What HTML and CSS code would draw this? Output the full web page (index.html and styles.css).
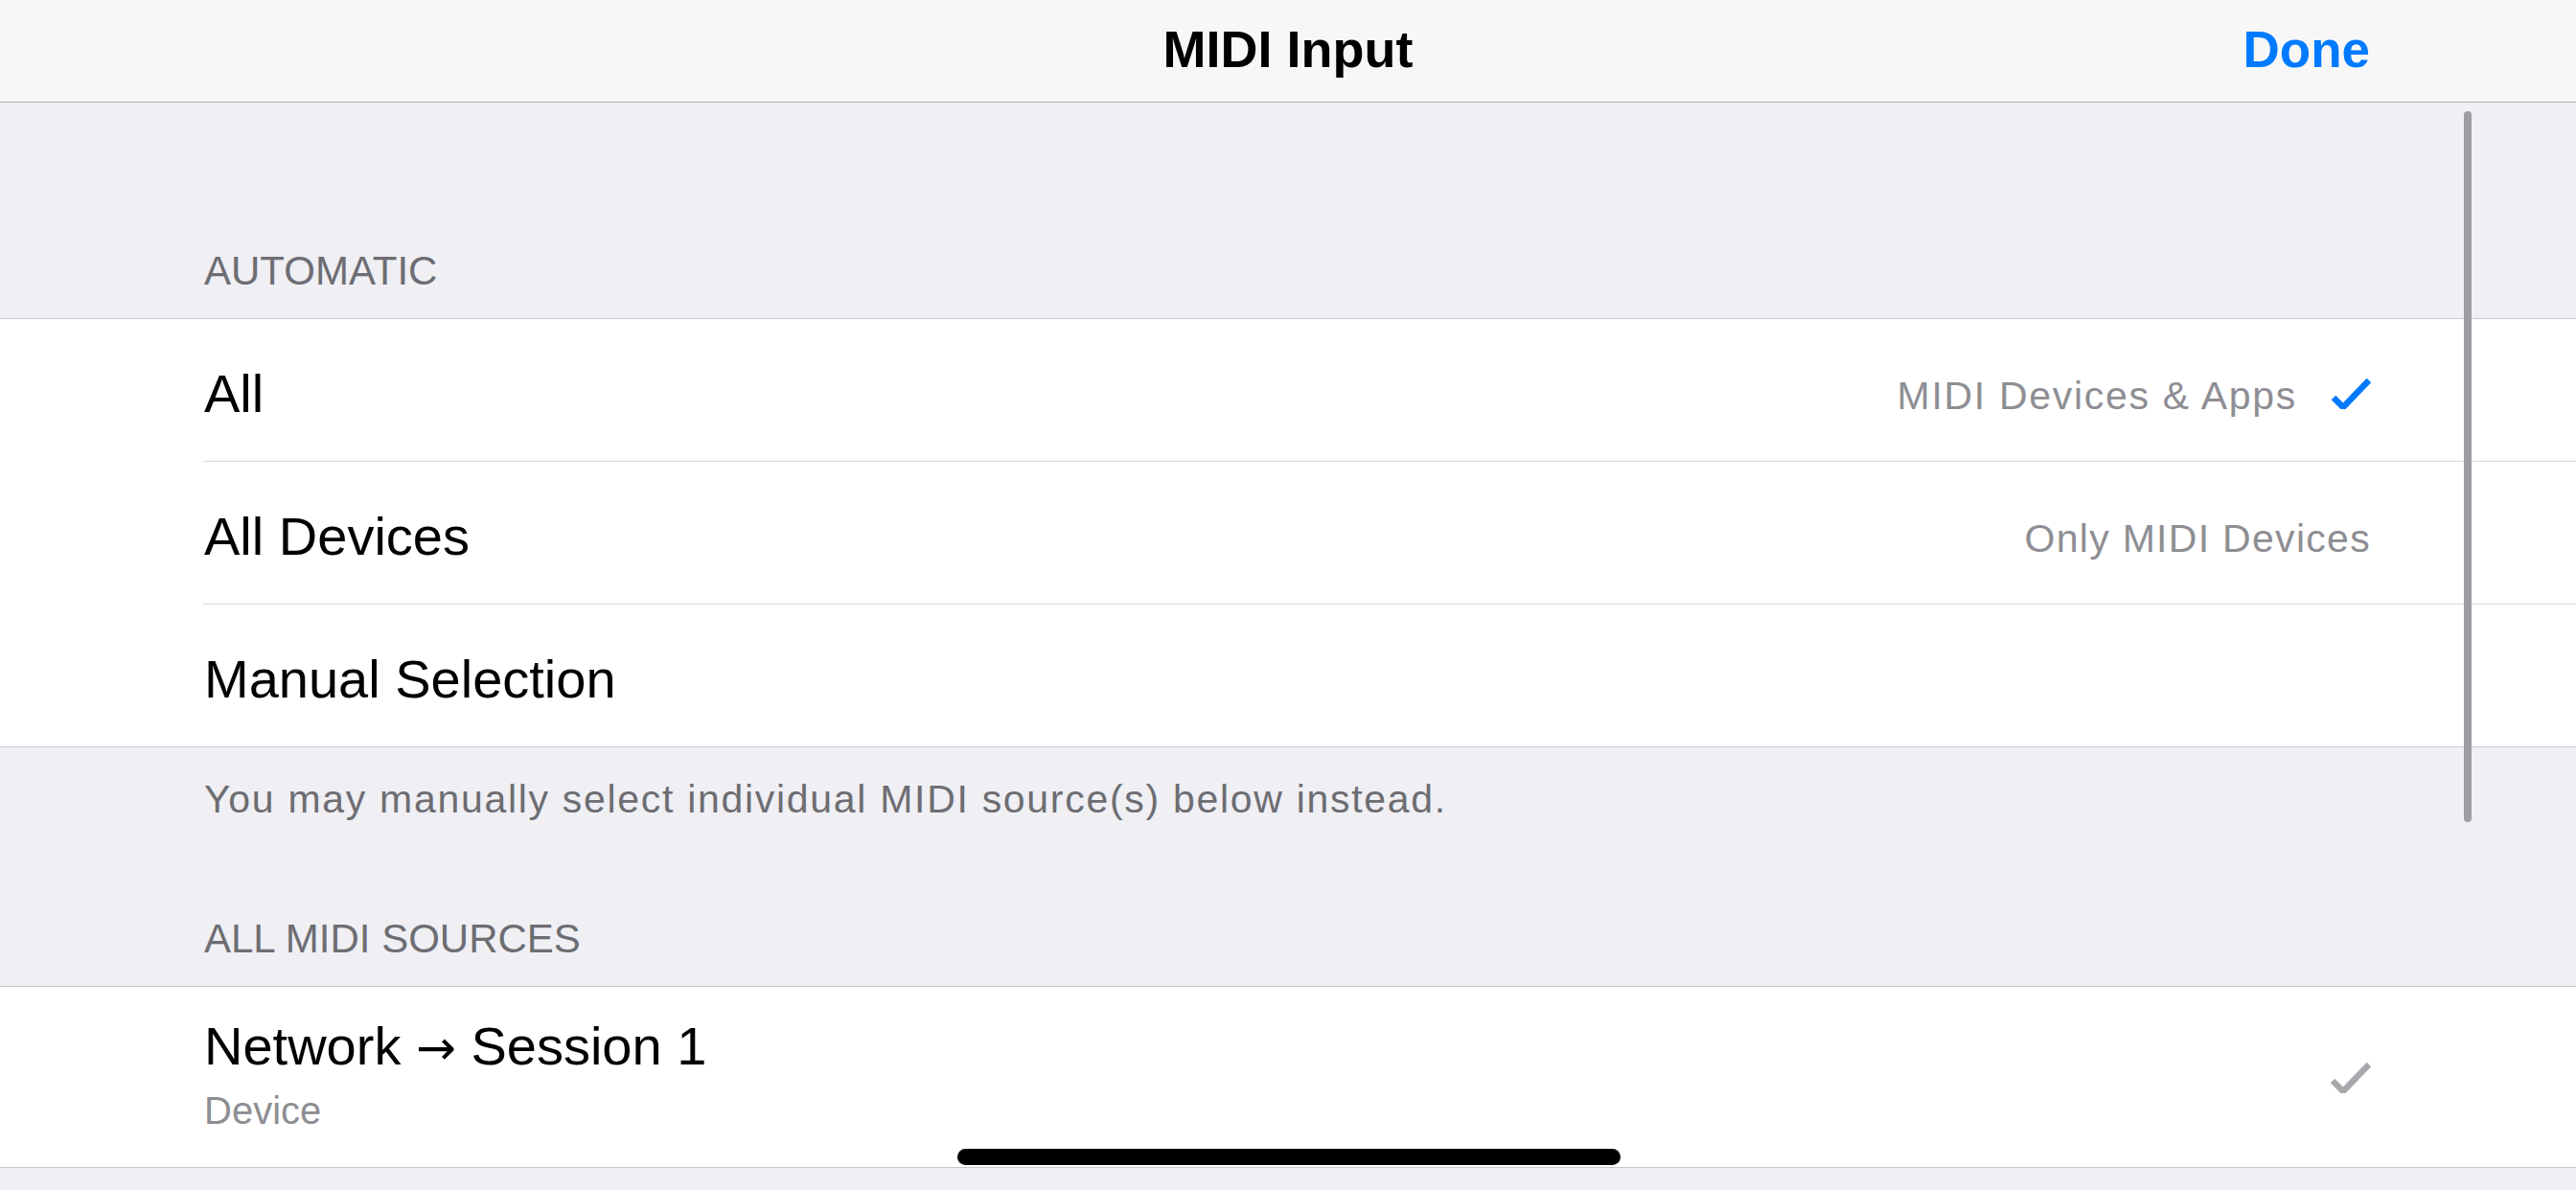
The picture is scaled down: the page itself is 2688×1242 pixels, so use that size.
FILE: index.html
```html
<!DOCTYPE html>
<html lang="en">
<head>
<meta charset="utf-8">
<title>MIDI Input</title>
<link rel="stylesheet" href="styles.css">
</head>
<body>
<div class="screen">
  <header class="navbar">
    <div class="nav-side"></div>
    <div class="nav-title">MIDI Input</div>
    <div class="nav-side nav-right"><span class="nav-done">Done</span></div>
  </header>

  <main class="table">
    <div class="section-header first">AUTOMATIC</div>
    <div class="group">
      <div class="cell">
        <div class="cell-inner">
          <span class="cell-title">All</span>
          <span class="cell-value wide">MIDI Devices &amp; Apps</span>
          <svg class="check check-blue" viewBox="0 0 42 32" width="42" height="32"><path d="M3 20 L13 30 L40 2" /></svg>
        </div>
      </div>
      <div class="cell">
        <div class="cell-inner">
          <span class="cell-title">All Devices</span>
          <span class="cell-value">Only MIDI Devices</span>
        </div>
      </div>
      <div class="cell">
        <div class="cell-inner last">
          <span class="cell-title">Manual Selection</span>
        </div>
      </div>
    </div>
    <div class="section-footer">You may manually select individual MIDI source(s) below instead.</div>

    <div class="section-header second">ALL MIDI SOURCES</div>
    <div class="group">
      <div class="cell">
        <div class="cell-inner tall last">
          <div class="cell-stack">
            <span class="cell-title">Network <span class="arrow">→</span> Session 1</span>
            <span class="cell-subtitle">Device</span>
          </div>
          <svg class="check check-gray" viewBox="0 0 42 32" width="42" height="32"><path d="M2 19 L13 30 L40 2" /></svg>
        </div>
      </div>
    </div>
  </main>

  <div class="scroll-indicator"></div>
  <div class="home-indicator"></div>
</div>
</body>
</html>
```

FILE: styles.css
```css
html, body {
  margin: 0;
  padding: 0;
}

body {
  background: #efeff4;
  font-family: "Liberation Sans", Arial, sans-serif;
  color: #000;
  width: 2688px;
  height: 1242px;
  overflow: hidden;
}

.screen {
  position: relative;
  width: 2688px;
  height: 1242px;
}

.navbar {
  height: 106px;
  background: #f7f7f8;
  border-bottom: 1px solid #b1b1b3;
  display: grid;
  grid-template-columns: 1fr auto 1fr;
  align-items: center;
}

.nav-title {
  font-size: 54px;
  line-height: 54px;
  font-weight: 700;
  margin-top: -4px;
}

.nav-right {
  display: flex;
  justify-content: flex-end;
  padding-right: 215px;
}

.nav-done {
  font-size: 53px;
  line-height: 53px;
  font-weight: 700;
  color: #007aff;
  margin-top: -4px;
}

.table {
  display: flex;
  flex-direction: column;
}

.section-header {
  font-size: 42px;
  line-height: 42px;
  color: #6d6d72;
  padding: 0 214px 28px 213px;
}

.section-header.first {
  padding-top: 155px;
}

.section-header.second {
  padding-top: 104px;
}

.group {
  background: #fff;
  border-top: 1px solid #c8c7cc;
  border-bottom: 1px solid #c8c7cc;
}

.cell {
  padding-left: 212px;
}

.cell-inner {
  height: 148px;
  display: flex;
  align-items: center;
  padding-right: 214px;
  padding-left: 1px;
  border-bottom: 1px solid #d8d8dc;
}

.cell-inner.last {
  border-bottom: none;
}

.cell-inner.tall {
  height: 188px;
}

.cell-title {
  font-size: 56px;
  line-height: 56px;
  padding-top: 8px;
  flex: 1;
}

.arrow {
  font-family: "DejaVu Sans", sans-serif;
  font-size: 50px;
  line-height: 0;
}

.cell-value {
  font-size: 41px;
  line-height: 41px;
  letter-spacing: 1.3px;
  color: #8e8e93;
  padding-top: 12px;
}

.cell-value.wide {
  letter-spacing: 1.7px;
}

.cell-stack {
  display: flex;
  flex-direction: column;
  flex: 1;
  gap: 19px;
  margin-top: -6px;
}

.cell-stack .cell-title {
  padding-top: 0;
  flex: none;
  height: 56px;
}

.cell-subtitle {
  font-size: 40px;
  line-height: 40px;
  color: #8e8e93;
}

.check {
  display: block;
  flex: none;
}

.check path {
  fill: none;
}

.check-blue {
  margin-left: 35px;
  margin-top: 8px;
}

.check-blue path {
  stroke: #007aff;
  stroke-width: 6.5;
  stroke-linecap: butt;
  stroke-linejoin: miter;
}

.check-gray {
  margin-top: 2px;
}

.check-gray path {
  stroke: #a9a9ad;
  stroke-width: 6.5;
  stroke-linecap: butt;
  stroke-linejoin: miter;
}

.section-footer {
  font-size: 41px;
  line-height: 41px;
  letter-spacing: 1.7px;
  color: #6d6d72;
  padding: 34px 214px 0 213px;
}

.scroll-indicator {
  position: absolute;
  left: 2571px;
  top: 116px;
  width: 8px;
  height: 742px;
  border-radius: 4px;
  background: #9d9da2;
}

.home-indicator {
  position: absolute;
  left: 999px;
  top: 1199px;
  width: 692px;
  height: 17px;
  border-radius: 9px;
  background: #000;
}
```
